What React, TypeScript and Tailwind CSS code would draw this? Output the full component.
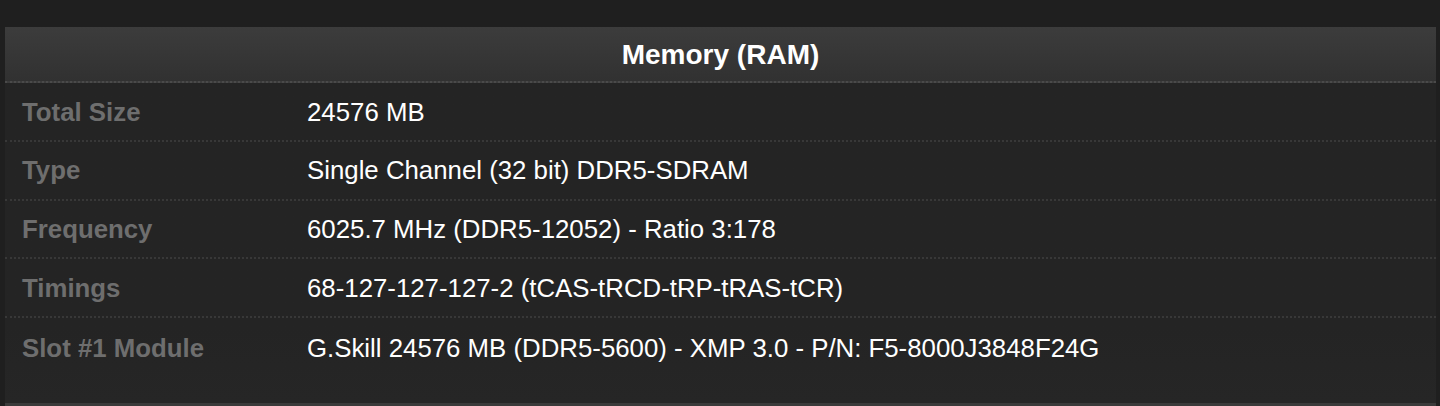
const rows = [
  { label: "Total Size", value: "24576 MB" },
  { label: "Type", value: "Single Channel (32 bit) DDR5-SDRAM" },
  { label: "Frequency", value: "6025.7 MHz (DDR5-12052) - Ratio 3:178" },
  { label: "Timings", value: "68-127-127-127-2 (tCAS-tRCD-tRP-tRAS-tCR)" },
  { label: "Slot #1 Module", value: "G.Skill 24576 MB (DDR5-5600) - XMP 3.0 - P/N: F5-8000J3848F24G" },
];

export default function App() {
  return (
    <div className="h-[406px] overflow-hidden bg-[#1f1f1f] pt-[27px] pl-[5px] pr-[4px] font-['Liberation_Sans',Arial,sans-serif]">
      <div className="bg-gradient-to-b from-[#242424] from-80% to-[#262626] pb-[26px]">
        <div className="flex h-[56px] items-center justify-center border-b-2 border-dotted border-[#4a4a4a] bg-gradient-to-b from-[#3c3c3c] to-[#313131] pt-[2px]">
          <h2 className="text-[28px] font-bold text-white">Memory (RAM)</h2>
        </div>
        {rows.map((r, i) => (
          <div
            key={r.label}
            className={`flex h-[58.75px] items-center pt-[1px] ${i < rows.length - 1 ? "border-b-2 border-dotted border-[#383838]" : ""}`}
          >
            <div className="w-[302px] shrink-0 pl-[17px] text-[25.8px] font-bold text-[#6e6e6e]">{r.label}</div>
            <div className="text-[25.8px] text-white">{r.value}</div>
          </div>
        ))}
      </div>
      <div className="h-[10px] bg-[#3a3a3a]" />
    </div>
  );
}
